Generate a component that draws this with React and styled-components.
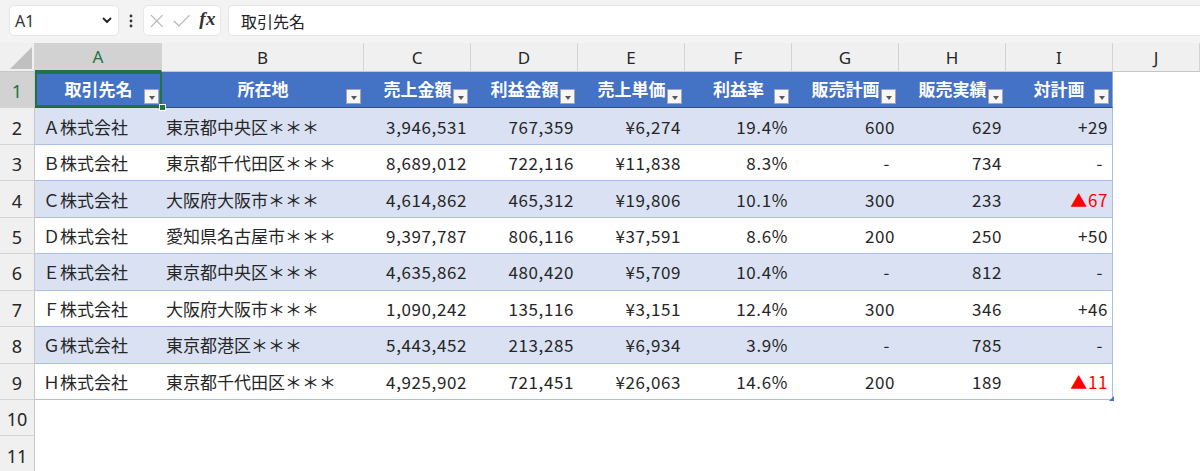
import React from "react";
import styled, { createGlobalStyle } from "styled-components";

const GlobalStyle = createGlobalStyle`
  body {
    margin: 0;
    background: #ffffff;
    font-family: "Noto Sans CJK JP", "Noto Sans", sans-serif;
  }
`;

const rows = [
  ["Ａ株式会社", "東京都中央区＊＊＊", "3,946,531", "767,359", "¥6,274", "19.4%", "600", "629", "+29"],
  ["Ｂ株式会社", "東京都千代田区＊＊＊", "8,689,012", "722,116", "¥11,838", "8.3%", "-", "734", "-"],
  ["Ｃ株式会社", "大阪府大阪市＊＊＊", "4,614,862", "465,312", "¥19,806", "10.1%", "300", "233", "▲67"],
  ["Ｄ株式会社", "愛知県名古屋市＊＊＊", "9,397,787", "806,116", "¥37,591", "8.6%", "200", "250", "+50"],
  ["Ｅ株式会社", "東京都中央区＊＊＊", "4,635,862", "480,420", "¥5,709", "10.4%", "-", "812", "-"],
  ["Ｆ株式会社", "大阪府大阪市＊＊＊", "1,090,242", "135,116", "¥3,151", "12.4%", "300", "346", "+46"],
  ["Ｇ株式会社", "東京都港区＊＊＊", "5,443,452", "213,285", "¥6,934", "3.9%", "-", "785", "-"],
  ["Ｈ株式会社", "東京都千代田区＊＊＊", "4,925,902", "721,451", "¥26,063", "14.6%", "200", "189", "▲11"],
];

const headers = ["取引先名", "所在地", "売上金額", "利益金額", "売上単価", "利益率", "販売計画", "販売実績", "対計画"];
const letters = ["A", "B", "C", "D", "E", "F", "G", "H", "I", "J"];

const Page = styled.div`
  width: 1200px;
  height: 471px;
  overflow: hidden;
  background: #ffffff;
`;

const FormulaBar = styled.div`
  height: 43px;
  box-sizing: border-box;
  background: #f3f3f3;
  display: flex;
  align-items: flex-start;
  padding: 5px 0 0 9px;
`;

const Box = styled.div`
  height: 31px;
  box-sizing: border-box;
  background: #ffffff;
  border: 1px solid #e6e6e6;
  border-radius: 5px;
  display: flex;
  align-items: center;
`;

const NameBox = styled(Box)`
  width: 110px;
  padding: 0 6px 0 5px;
  justify-content: space-between;
  font-family: "Noto Sans", sans-serif;
  font-size: 16px;
  color: #333;
`;

const Dots = styled.div`
  width: 24px;
  height: 31px;
  display: flex;
  align-items: center;
  justify-content: center;
`;

const FxBox = styled(Box)`
  width: 78px;
  padding: 0 4px 0 6px;
  gap: 9px;
`;

const Fx = styled.span`
  font-family: "Liberation Serif", "DejaVu Serif", serif;
  font-style: italic;
  font-weight: 700;
  font-size: 19px;
  color: #333;
  letter-spacing: 0.5px;
  margin-top: -3px;
`;

const Input = styled(Box)`
  flex: 1;
  margin-left: 7px;
  padding-left: 12px;
  font-size: 16px;
  color: #222;
  border-right: none;
  border-radius: 5px 0 0 5px;
`;

const Sheet = styled.div`
  display: grid;
  grid-template-columns: 35px 127px 202px repeat(7, 107px) 1fr;
  grid-template-rows: 29px repeat(11, 36.44px);
`;

const Corner = styled.div`
  background: #f0f0f0;
  border-right: 1px solid #d4d4d4;
  border-bottom: 1px solid #c6c6c6;
  position: relative;
  &::after {
    content: "";
    position: absolute;
    right: 2px;
    bottom: 2px;
    border-style: solid;
    border-width: 0 0 22px 22px;
    border-color: transparent transparent #c0c0c0 transparent;
  }
`;

const ColHead = styled.div`
  background: ${(p) => (p.$active ? "#d2d2d2" : "#f0f0f0")};
  color: ${(p) => (p.$active ? "#217346" : "#262626")};
  border-right: 1px solid #d4d4d4;
  border-bottom: ${(p) => (p.$active ? "2px solid #217346" : "1px solid #c6c6c6")};
  display: flex;
  align-items: center;
  justify-content: center;
  font-family: "Noto Sans", "Liberation Sans", sans-serif;
  font-size: 17px;
  box-sizing: border-box;
`;

const RowHead = styled.div`
  background: ${(p) => (p.$active ? "#d2d2d2" : "#f0f0f0")};
  color: ${(p) => (p.$active ? "#217346" : "#262626")};
  border-right: 1px solid #c6c6c6;
  border-bottom: 1px solid #d4d4d4;
  display: flex;
  align-items: center;
  justify-content: center;
  padding-top: 3px;
  font-family: "Noto Sans", "Liberation Sans", sans-serif;
  font-size: 18px;
  box-sizing: border-box;
`;

const HeadCell = styled.div`
  position: relative;
  background: #4472c4;
  color: #ffffff;
  font-weight: 700;
  font-size: 17px;
  display: flex;
  align-items: center;
  justify-content: center;
  padding-bottom: 3px;
  border-bottom: 1px solid #2f4f86;
  box-sizing: border-box;
  box-shadow: ${(p) => (p.$selected ? "inset 0 0 0 2px #217346" : "none")};
  border-right: ${(p) => (p.$last ? "1px solid #8ea9db" : "none")};
`;

const FilterButton = styled.span`
  position: absolute;
  right: 3px;
  bottom: 3px;
  width: 15px;
  height: 15px;
  box-sizing: border-box;
  background: #f6f6f6;
  border: 1px solid #a6a6a6;
  display: flex;
  align-items: center;
  justify-content: center;
  &::after {
    content: "";
    border-style: solid;
    border-width: 4px 3.5px 0 3.5px;
    border-color: #595959 transparent transparent transparent;
    margin-top: 2px;
  }
`;

const FillHandle = styled.span`
  position: absolute;
  right: -4px;
  bottom: -4px;
  width: 7px;
  height: 7px;
  background: #217346;
  border: 1px solid #ffffff;
  box-sizing: border-box;
  z-index: 2;
`;

const DataCell = styled.div`
  position: relative;
  background: ${(p) => (p.$band ? "#d9e1f2" : "#ffffff")};
  border-bottom: 1px solid #a9bfe6;
  border-right: ${(p) => (p.$last ? "1px solid #a9bfe6" : "none")};
  display: flex;
  align-items: center;
  justify-content: ${(p) => (p.$right ? "flex-end" : "flex-start")};
  padding: 0 ${(p) => (p.$dash ? "9px" : "4px")} 0 ${(p) => (p.$indent ? "8px" : "4px")};
  font-size: 17px;
  letter-spacing: ${(p) => (p.$right ? "0.6px" : "0")};
  color: ${(p) => (p.$red ? "#ff0000" : "#262626")};
  white-space: nowrap;
  box-sizing: border-box;
`;

const ResizeHandle = styled.span`
  position: absolute;
  right: -2px;
  bottom: -2px;
  border-style: solid;
  border-width: 0 0 5px 5px;
  border-color: transparent transparent #4472c4 transparent;
`;

const Blank = styled.div`
  background: #ffffff;
`;

const Chevron = () => (
  <svg width="10" height="7" viewBox="0 0 10 7">
    <path d="M1.5 1.5 L5 5 L8.5 1.5" fill="none" stroke="#222" strokeWidth="1.8" strokeLinecap="round" strokeLinejoin="round" />
  </svg>
);

const VDots = () => (
  <svg width="4" height="14" viewBox="0 0 4 14">
    <circle cx="2" cy="2" r="1.4" fill="#333" />
    <circle cx="2" cy="7" r="1.4" fill="#333" />
    <circle cx="2" cy="12" r="1.4" fill="#333" />
  </svg>
);

const Cross = () => (
  <svg width="14" height="14" viewBox="0 0 14 14">
    <path d="M1 1 L13 13 M13 1 L1 13" stroke="#b4b4b4" strokeWidth="1.2" />
  </svg>
);

const Tick = () => (
  <svg width="18" height="13" viewBox="0 0 18 13">
    <path d="M1 7 L6 12 L17 1" fill="none" stroke="#b4b4b4" strokeWidth="1.2" />
  </svg>
);

export default function App() {
  return (
    <Page>
      <GlobalStyle />
      <FormulaBar>
        <NameBox>
          <span>A1</span>
          <Chevron />
        </NameBox>
        <Dots>
          <VDots />
        </Dots>
        <FxBox>
          <Cross />
          <Tick />
          <Fx>fx</Fx>
        </FxBox>
        <Input>取引先名</Input>
      </FormulaBar>
      <Sheet>
        <Corner />
        {letters.map((l, i) => (
          <ColHead key={l} $active={i === 0}>
            {l}
          </ColHead>
        ))}

        <RowHead $active>1</RowHead>
        {headers.map((h, i) => (
          <HeadCell key={h} $selected={i === 0} $last={i === headers.length - 1}>
            {h}
            <FilterButton />
            {i === 0 && <FillHandle />}
          </HeadCell>
        ))}
        <Blank />

        {rows.map((r, ri) => (
          <React.Fragment key={ri}>
            <RowHead>{ri + 2}</RowHead>
            {r.map((v, ci) => (
              <DataCell
                key={ci}
                $band={ri % 2 === 0}
                $right={ci > 1}
                $indent={ci === 0}
                $dash={v === "-"}
                $red={v.startsWith("▲")}
                $last={ci === r.length - 1}
              >
                {v}
                {ri === rows.length - 1 && ci === r.length - 1 && <ResizeHandle />}
              </DataCell>
            ))}
            <Blank />
          </React.Fragment>
        ))}

        {[10, 11].map((n) => (
          <React.Fragment key={n}>
            <RowHead>{n}</RowHead>
            {letters.map((l) => (
              <Blank key={l} />
            ))}
          </React.Fragment>
        ))}
      </Sheet>
    </Page>
  );
}
